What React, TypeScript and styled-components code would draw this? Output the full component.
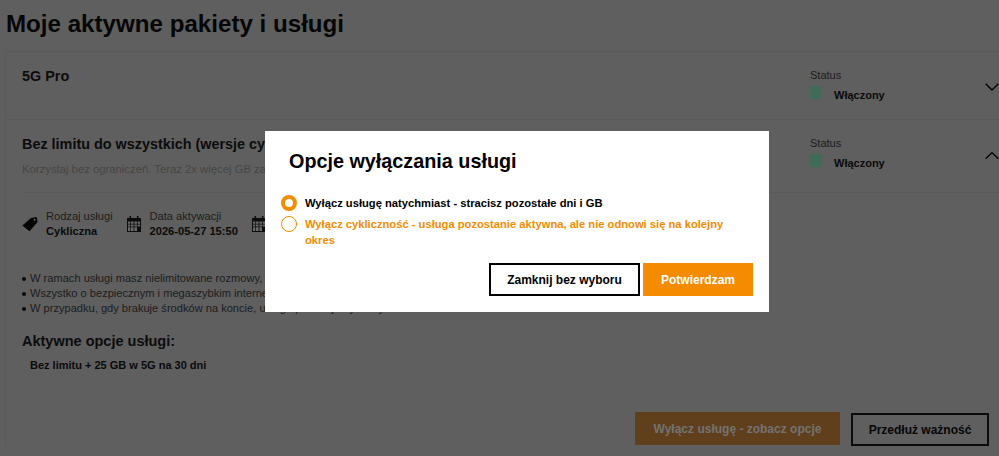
import React from 'react'
import styled, { createGlobalStyle } from 'styled-components'

const Global = createGlobalStyle`
  html, body { margin: 0; padding: 0; height: 100%; overflow: hidden; }
  body { background: #5f5f5f; font-family: "Liberation Sans", Arial, sans-serif; color: #000; }
  * { box-sizing: border-box; }
`

const Calendar = () => (
  <CalendarSvg viewBox="0 0 16 16">
    <path fill="#0d0d0d" d="M1 2h2.5V0h1.6v2h5.8V0h1.6v2H15v14H1z" />
    <path fill="#6a6a6a" d="M2 5.5h2.3v2.2H2zM5 5.5h2.6v2.2H5zM8.4 5.5H11v2.2H8.4zM11.7 5.5H14v2.2h-2.3zM2 8.4h2.3v2.2H2zM5 8.4h2.6v2.2H5zM8.4 8.4H11v2.2H8.4zM11.7 8.4H14v2.2h-2.3zM2 11.3h2.3V15H2zM5 11.3h2.6V15H5zM8.4 11.3H11V15H8.4z" />
  </CalendarSvg>
)

const Chevron = ({ up }: { up?: boolean }) => (
  <ChevronSvg viewBox="0 0 14 8">
    <path d={up ? 'M.7 7.8 7 1.6l6.3 6.2' : 'M.7.8 7 7l6.3-6.2'} fill="none" stroke="#000" strokeWidth="1.3" />
  </ChevronSvg>
)

const App = () => {
  return (
    <Page>
      <Global />
      <Title>Moje aktywne pakiety i usługi</Title>
      <Card>
        <CollapsedRow>
          <RowTitle>5G Pro</RowTitle>
          <StatusBlock>
            <StatusLabel>Status</StatusLabel>
            <StatusValue><Swatch /><span>Włączony</span></StatusValue>
          </StatusBlock>
          <ChevronSlot><Chevron /></ChevronSlot>
        </CollapsedRow>
        <ExpandedRow>
          <HeaderRow>
            <HeaderText>
              <RowTitle>Bez limitu do wszystkich (wersje cykliczna)</RowTitle>
              <Lead>Korzystaj bez ograniczeń. Teraz 2x więcej GB za tę samą cenę</Lead>
            </HeaderText>
            <StatusBlock>
              <StatusLabel>Status</StatusLabel>
              <StatusValue><Swatch /><span>Włączony</span></StatusValue>
            </StatusBlock>
            <ChevronSlot><Chevron up /></ChevronSlot>
          </HeaderRow>
          <Facts>
            <Fact>
              <TagSvg viewBox="0 0 17 16">
                <path fill="#050505" fillRule="evenodd" d="M.4 9.6 9.6 1.6 15.6.6l1 5.4L8 15.6zM13.4 2.4a1 1 0 1 0 .01 0z" />
              </TagSvg>
              <FactText><FactLabel>Rodzaj usługi</FactLabel><FactValue>Cykliczna</FactValue></FactText>
            </Fact>
            <Fact>
              <Calendar />
              <FactText><FactLabel>Data aktywacji</FactLabel><FactValue>2026-05-27 15:50</FactValue></FactText>
            </Fact>
            <Fact>
              <Calendar />
              <FactText><FactLabel>Data ważności</FactLabel><FactValue>2026-06-26 15:50</FactValue></FactText>
            </Fact>
          </Facts>
          <Bullets>
            <Bullet>W ramach usługi masz nielimitowane rozmowy, SMS-y i MMS-y</Bullet>
            <Bullet>Wszystko o bezpiecznym i megaszybkim internecie 5G</Bullet>
            <Bullet>W przypadku, gdy brakuje środków na koncie, usługa przestaje być aktywna</Bullet>
          </Bullets>
          <OptionsTitle>Aktywne opcje usługi:</OptionsTitle>
          <OptionItem>Bez limitu + 25 GB w 5G na 30 dni</OptionItem>
          <Actions>
            <MutedButton>Wyłącz usługę - zobacz opcje</MutedButton>
            <OutlineButton>Przedłuż ważność</OutlineButton>
          </Actions>
        </ExpandedRow>
      </Card>

      <Dialog>
        <DialogTitle>Opcje wyłączania usługi</DialogTitle>
        <Choices>
          <Choice>
            <Radio $on />
            <ChoiceText>Wyłącz usługę natychmiast - stracisz pozostałe dni i GB</ChoiceText>
          </Choice>
          <Choice>
            <Radio />
            <ChoiceText $orange>Wyłącz cykliczność - usługa pozostanie aktywna, ale nie odnowi się na kolejny okres</ChoiceText>
          </Choice>
        </Choices>
        <DialogActions>
          <CloseButton>Zamknij bez wyboru</CloseButton>
          <ConfirmButton>Potwierdzam</ConfirmButton>
        </DialogActions>
      </Dialog>
    </Page>
  )
}

export default App

const Page = styled.div`
  width: 999px;
  height: 456px;
  overflow: hidden;
  padding-left: 5px;
`
const Title = styled.h1`
  margin: 0;
  padding: 8px 0 0 1px;
  height: 51px;
  font-size: 24.15px;
  line-height: 32px;
  font-weight: 700;
  color: #060606;
`
const Card = styled.section`
  border-left: 1px solid #5a5a5a;
  border-top: 1px solid #5a5a5a;
`
const CollapsedRow = styled.div`
  height: 68px;
  padding: 16px 0 0 16px;
  display: flex;
  border-bottom: 1px solid #5a5a5a;
`
const ExpandedRow = styled.div`
  padding: 16px 0 0 16px;
`
const HeaderRow = styled.div`
  display: flex;
  height: 57px;
  border-bottom: 1px solid #5a5a5a;
`
const HeaderText = styled.div`
  flex: 1;
  min-width: 0;
`
const RowTitle = styled.h2`
  margin: -2px 0 0;
  flex: 1;
  font-size: 14.4px;
  line-height: 20px;
  font-weight: 700;
  color: #0c0c0c;
`
const Lead = styled.p`
  margin: 8px 0 0;
  font-size: 11.3px;
  line-height: 14px;
  color: #464646;
`
const StatusBlock = styled.div`
  flex: none;
  width: 175px;
`
const StatusLabel = styled.div`
  font-size: 11px;
  line-height: 14px;
  color: #1c1c1c;
`
const StatusValue = styled.div`
  display: flex;
  align-items: flex-start;
  margin-top: 4px;
  font-size: 11px;
  font-weight: 700;
  line-height: 14px;
  color: #0a0a0a;
  & > span:last-child { margin-top: 2px; }
`
const Swatch = styled.span`
  flex: none;
  width: 12px;
  height: 13px;
  margin-right: 12px;
  background: #3f6b57;
`
const ChevronSlot = styled.div`
  flex: none;
  width: 14px;
  padding-top: 15px;
`
const ChevronSvg = styled.svg`
  display: block;
  width: 14px;
  height: 8px;
`
const Facts = styled.div`
  display: flex;
  gap: 13px;
  padding-top: 16px;
`
const Fact = styled.div`
  display: flex;
  align-items: center;
  gap: 8px;
`
const FactText = styled.div`
  font-size: 11.1px;
  line-height: 15px;
`
const FactLabel = styled.div`
  color: #1c1c1c;
`
const FactValue = styled.div`
  font-weight: 700;
  color: #0a0a0a;
`
const TagSvg = styled.svg`
  width: 16px;
  height: 16px;
`
const CalendarSvg = styled.svg`
  width: 16px;
  height: 16px;
`
const Bullets = styled.div`
  margin-top: 32px;
  font-size: 11.1px;
  line-height: 15px;
  color: #1c1c1c;
`
const Bullet = styled.div`
  display: flex;
  align-items: center;
  gap: 4px;
  &::before {
    content: '';
    flex: none;
    width: 4px;
    height: 4px;
    border-radius: 50%;
    background: #0a0a0a;
  }
`
const OptionsTitle = styled.h3`
  margin: 15px 0 0;
  font-size: 14.5px;
  line-height: 20px;
  font-weight: 700;
  color: #0c0c0c;
`
const OptionItem = styled.div`
  margin: 7px 0 0 8px;
  font-size: 11px;
  line-height: 14px;
  font-weight: 700;
  color: #0a0a0a;
`
const Actions = styled.div`
  display: flex;
  justify-content: flex-end;
  align-items: flex-start;
  gap: 11px;
  margin-top: 40px;
  padding-right: 10px;
`
const MutedButton = styled.button`
  width: 205px;
  height: 33px;
  border: 0;
  padding: 0;
  background: #5f3f1c;
  color: #737373;
  font: 700 12px "Liberation Sans", Arial, sans-serif;
`
const OutlineButton = styled.button`
  width: 138px;
  height: 33px;
  margin-top: 1px;
  padding: 0;
  background: transparent;
  border: 2px solid #0a0a0a;
  color: #060606;
  font: 700 12px "Liberation Sans", Arial, sans-serif;
`
const Dialog = styled.div`
  position: fixed;
  left: 265px;
  top: 131px;
  width: 504px;
  height: 181px;
  padding: 18px 16px 0 16px;
  background: #fff;
  display: flex;
  flex-direction: column;
`
const DialogTitle = styled.h2`
  margin: 0 0 0 8px;
  font-size: 19.8px;
  line-height: 24px;
  font-weight: 700;
`
const Choices = styled.div`
  margin-top: 22px;
  display: flex;
  flex-direction: column;
  gap: 5px;
`
const Choice = styled.div`
  display: flex;
  gap: 8px;
`
const Radio = styled.span<{ $on?: boolean }>`
  flex: none;
  width: 16px;
  height: 16px;
  border-radius: 50%;
  border: ${p => (p.$on ? '4px' : '1.5px')} solid #f48c00;
  background: #fff;
`
const ChoiceText = styled.span<{ $orange?: boolean }>`
  font-size: 11.2px;
  line-height: 16px;
  font-weight: 700;
  color: ${p => (p.$orange ? '#f48c00' : '#000')};
`
const DialogActions = styled.div`
  display: flex;
  justify-content: flex-end;
  gap: 3px;
  margin-top: 15px;
`
const CloseButton = styled.button`
  width: 151px;
  height: 33px;
  padding: 0;
  background: #fff;
  border: 2px solid #000;
  color: #000;
  font: 700 12px "Liberation Sans", Arial, sans-serif;
`
const ConfirmButton = styled.button`
  width: 110px;
  height: 33px;
  padding: 0;
  border: 0;
  background: #f58b00;
  color: #fff;
  font: 700 12px "Liberation Sans", Arial, sans-serif;
`
